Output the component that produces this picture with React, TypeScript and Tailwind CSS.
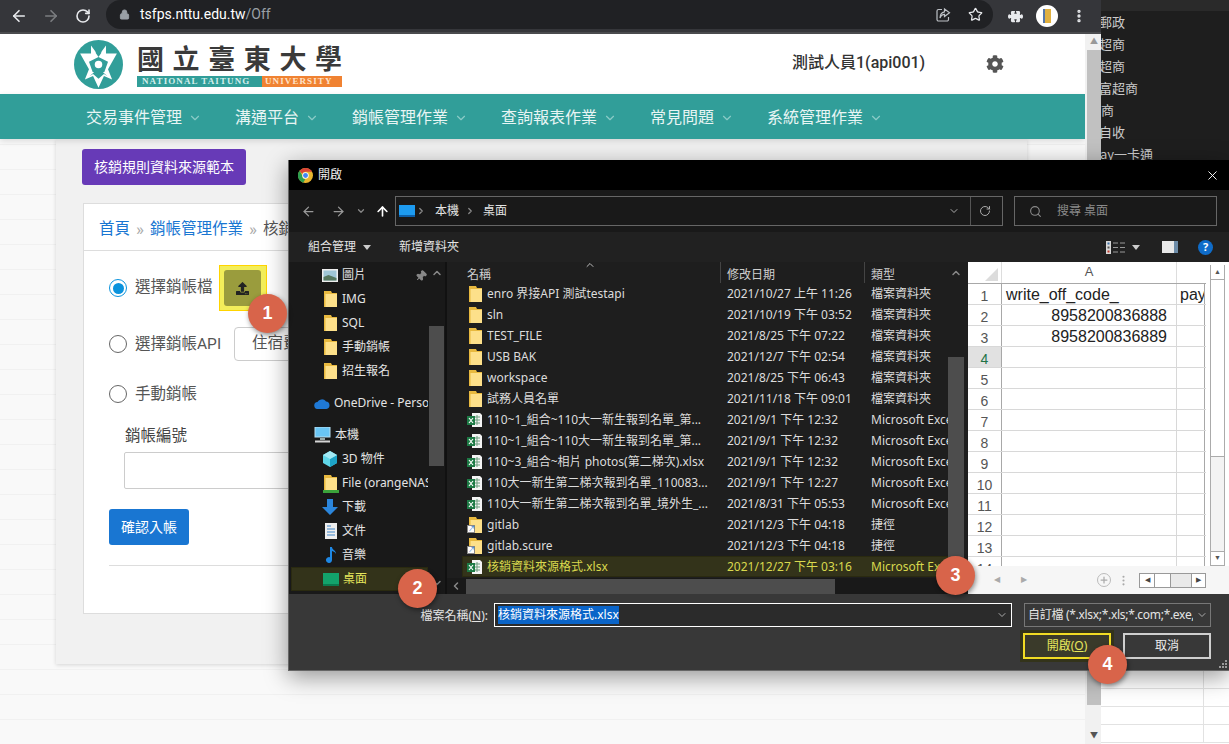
import React from 'react'
import { ArrowLeft, ArrowRight, ChevronDown, ChevronLeft, ChevronRight, Lock, RotateCw, Star, X, Search, ArrowUp, MoreVertical, Pin, ChevronUp, Plus } from 'lucide-react'
import { FaCog, FaUpload } from 'react-icons/fa'
import { BsPuzzleFill } from 'react-icons/bs'

const navItems = ['交易事件管理', '溝通平台', '銷帳管理作業', '查詢報表作業', '常見問題', '系統管理作業']

const sideRows = [
  { text: '郵政', cls: 'ml-[-2px]' },
  { text: '超商', cls: 'ml-[-2px]' },
  { text: '超商', cls: 'ml-[-2px]' },
  { text: '富超商', cls: 'ml-[-2px]' },
  { text: '商', cls: 'ml-0' },
  { text: '自收', cls: 'ml-[-2px]' },
  { text: 'ay一卡通', cls: 'ml-[-1px]' },
]

const files = [
  { kind: 'folder', name: 'enro 界接API 測試testapi', date: '2021/10/27 上午 11:26', type: '檔案資料夾' },
  { kind: 'folder', name: 'sln', date: '2021/10/19 下午 03:52', type: '檔案資料夾' },
  { kind: 'folder', name: 'TEST_FILE', date: '2021/8/25 下午 07:22', type: '檔案資料夾' },
  { kind: 'folder', name: 'USB BAK', date: '2021/12/7 下午 02:54', type: '檔案資料夾' },
  { kind: 'folder', name: 'workspace', date: '2021/8/25 下午 06:43', type: '檔案資料夾' },
  { kind: 'folder', name: '試務人員名單', date: '2021/11/18 下午 09:01', type: '檔案資料夾' },
  { kind: 'excel', name: '110~1_組合~110大一新生報到名單_第...', date: '2021/9/1 下午 12:32', type: 'Microsoft Excel' },
  { kind: 'excel', name: '110~1_組合~110大一新生報到名單_第...', date: '2021/9/1 下午 12:32', type: 'Microsoft Excel' },
  { kind: 'excel', name: '110~3_組合~相片 photos(第二梯次).xlsx', date: '2021/9/1 下午 12:32', type: 'Microsoft Excel' },
  { kind: 'excel', name: '110大一新生第二梯次報到名單_110083...', date: '2021/9/1 下午 12:27', type: 'Microsoft Excel' },
  { kind: 'excel', name: '110大一新生第二梯次報到名單_境外生_...', date: '2021/8/31 下午 05:53', type: 'Microsoft Excel' },
  { kind: 'link', name: 'gitlab', date: '2021/12/3 下午 04:18', type: '捷徑' },
  { kind: 'link', name: 'gitlab.scure', date: '2021/12/3 下午 04:18', type: '捷徑' },
]

const Folder = () => (
  <svg width="13" height="16" viewBox="0 0 13 16" className="shrink-0">
    <path d="M0 0h7l1 2h5v14H0z" fill="#e8b93f" />
    <path d="M1.500 3H13v13H1.500z" fill="#fde08a" />
  </svg>
)

const ExcelIcon = () => (
  <svg width="16" height="16" viewBox="0 0 16 16" className="shrink-0">
    <path d="M5 1h8l2 2v12H5z" fill="#f4f4f4" />
    <path d="M7 5h6M7 8h6M7 11h6M10 3v10" stroke="#6d9e7e" strokeWidth="1" />
    <rect x="0" y="4" width="8" height="9" fill="#1d7a45" />
    <path d="M2 6l4 5M6 6l-4 5" stroke="#fff" strokeWidth="1.2" />
  </svg>
)

const LinkIcon = () => (
  <span className="relative w-[15px] h-[16px] shrink-0 flex justify-end">
    <Folder />
    <span className="absolute left-0 bottom-0 w-[8px] h-[8px] bg-white border border-[#888] text-[#1a6fc9] text-[7px] leading-[6px] text-center">↗</span>
  </span>
)

const Badge = ({ n, pos }: { n: number; pos: string }) => (
  <div className={`absolute ${pos} w-[39px] h-[39px] rounded-full bg-[#d8644a] text-white font-bold text-[18px] flex items-center justify-center shadow-[1px_2px_5px_rgba(0,0,0,0.45)] [font-family:'Liberation_Sans',sans-serif] z-20`}>
    {n}
  </div>
)

const Radio = ({ on }: { on?: boolean }) => (
  <span className={`w-[18px] h-[18px] rounded-full border-[1.5px] flex items-center justify-center shrink-0 ${on ? 'border-[#0b93dd]' : 'border-[#666666]'}`}>
    {on && <span className="w-[11px] h-[11px] rounded-full bg-[#0b93dd]" />}
  </span>
)

const Emblem = () => (
  <svg width="49" height="49" viewBox="12 12 144 144" className="shrink-0">
    <circle cx="84" cy="84" r="72" fill="#319e99" />
    <path d="M30 52H62V28L84 58L106 28V52H138L112 98L124 128L100 118L84 152L68 118L44 128L56 98Z" fill="#fff" />
    <path d="M76 24V50L84 62L92 50V24Z" fill="#319e99" />
    <path d="M84 62L112 76L102 104L84 118L66 104L56 76Z" fill="#319e99" />
    <path d="M58 118L84 96L110 118L100 112L84 126L68 112Z" fill="#319e99" />
    <circle cx="84" cy="84" r="11" fill="#fff" />
  </svg>
)

const ChromeIcon = () => (
  <svg width="15" height="15" viewBox="0 0 16 16" className="shrink-0">
    <circle cx="8" cy="8" r="8" fill="#e8b52f" />
    <path d="M8 0a8 8 0 0 1 7 4H8a4 4 0 0 0-3.500 2L1.600 3A8 8 0 0 1 8 0z" fill="#db4437" />
    <path d="M1.600 3l3 5a4 4 0 0 0 3.200 4l-2.300 3.600A8 8 0 0 1 1.600 3z" fill="#2d9e4f" />
    <circle cx="8" cy="8" r="3.400" fill="#fff" />
    <circle cx="8" cy="8" r="2.600" fill="#4285f4" />
  </svg>
)

const ShareIcon = () => (
  <svg width="16" height="16" viewBox="0 0 16 16" fill="none" stroke="#bdc1c6" strokeWidth="1.200" className="ml-auto shrink-0">
    <path d="M7 2.500H3.500A1.500 1.500 0 0 0 2 4v8.500A1.500 1.500 0 0 0 3.500 14H12a1.500 1.500 0 0 0 1.500-1.500V10" />
    <path d="M9.500 2l5 3.800-5 3.700V7.400C7.500 7.400 6 8.500 5 11c0-3.500 1.800-5.700 4.500-6.200z" />
  </svg>
)

const ViewIcon = () => (
  <svg width="19" height="13" viewBox="0 0 19 13" className="shrink-0">
    <rect x="0" y="0" width="5" height="13" fill="#d8d8d8" />
    <rect x="1.500" y="1.500" width="2" height="2" fill="#3a6ea5" />
    <rect x="1.500" y="5.500" width="2" height="2" fill="#555" />
    <rect x="1.500" y="9.500" width="2" height="2" fill="#c0392b" />
    <path d="M7 2h5M14 2h5M7 6.500h5M14 6.500h5M7 11h5M14 11h5" stroke="#999" strokeWidth="1" />
  </svg>
)

const Grip = () => (
  <svg width="9" height="9" viewBox="0 0 9 9" className="absolute right-[1px] bottom-[1px]">
    <path d="M6 0h2v2H6zM3 3h2v2H3zM6 3h2v2H6zM0 6h2v2H0zM3 6h2v2H3zM6 6h2v2H6z" fill="#999" />
  </svg>
)

const NavIcon = ({ kind }: { kind: string }) => {
  if (kind === 'pic') return (
    <svg width="16" height="13" viewBox="0 0 16 13"><rect width="16" height="13" fill="#eee" /><rect x="1.500" y="1.500" width="13" height="10" fill="#9fc6d6" /><path d="M1.500 8l5-2 8 3v2.500h-13z" fill="#56785f" /></svg>
  )
  if (kind === 'folder' || kind === 'net') return (
    <span className="relative flex justify-center w-[14px]">
      <Folder />
      {kind === 'net' && <span className="absolute left-[-1px] bottom-[-2px] w-[16px] h-[3px] bg-[#3ba33b]" />}
    </span>
  )
  if (kind === 'cloud') return (
    <svg width="16" height="11" viewBox="0 0 16 11"><path d="M4 11a3.500 3.500 0 0 1-.5-7A5 5 0 0 1 12 3.500 3.800 3.800 0 0 1 12.500 11z" fill="#1f79d6" /></svg>
  )
  if (kind === 'pc') return (
    <svg width="17" height="16" viewBox="0 0 17 16"><rect x="1" y="0" width="15" height="10" fill="#69c5f4" stroke="#b8dff2" /><rect x="6" y="11" width="5" height="2" fill="#9aa" /><rect x="1" y="13.500" width="15" height="2" fill="#d5d5d5" /></svg>
  )
  if (kind === '3d') return (
    <svg width="16" height="16" viewBox="0 0 16 16"><path d="M8 0l7 4v8l-7 4-7-4V4z" fill="#5fd6e8" /><path d="M8 8l7-4v8l-7 4z" fill="#1da3c7" /><path d="M8 8L1 4l7-4 7 4z" fill="#a2eaf5" /></svg>
  )
  if (kind === 'down') return (
    <svg width="16" height="16" viewBox="0 0 16 16"><path d="M5 0h6v8h5l-8 8-8-8h5z" fill="#2b86dc" /></svg>
  )
  if (kind === 'doc') return (
    <svg width="12" height="16" viewBox="0 0 12 16"><rect width="12" height="16" fill="#eee" /><path d="M2 3h4M2 6h8M2 9h8M2 12h8" stroke="#3f86c9" strokeWidth="1.200" /></svg>
  )
  if (kind === 'music') return (
    <svg width="12" height="16" viewBox="0 0 12 16"><path d="M5 0h2c0 3 4 3 4 7-1-2-2-2.500-4-3v9a3 3 0 1 1-2-2.800z" fill="#1e88e5" /></svg>
  )
  return <svg width="16" height="13" viewBox="0 0 16 13"><rect width="16" height="13" fill="#13a36b" /><rect y="11" width="16" height="2" fill="#0b7a4e" /></svg>
}

const sideNav = [
  { icon: 'pic', label: '圖片', pl: 'pl-[33px]', w: 'w-[16px]' },
  { icon: 'folder', label: 'IMG', pl: 'pl-[34px]', w: 'w-[15px]' },
  { icon: 'folder', label: 'SQL', pl: 'pl-[34px]', w: 'w-[15px]' },
  { icon: 'folder', label: '手動銷帳', pl: 'pl-[34px]', w: 'w-[15px]' },
  { icon: 'folder', label: '招生報名', pl: 'pl-[34px]', w: 'w-[15px]' },
]
const sideNav2 = [
  { icon: 'pc', label: '本機', pl: 'pl-[25px]', w: 'w-[17px]' },
  { icon: '3d', label: '3D 物件', pl: 'pl-[33px]', w: 'w-[16px]' },
  { icon: 'net', label: 'File (orangeNAS', pl: 'pl-[34px]', w: 'w-[15px]' },
  { icon: 'down', label: '下載', pl: 'pl-[33px]', w: 'w-[16px]' },
  { icon: 'doc', label: '文件', pl: 'pl-[35px]', w: 'w-[14px]' },
  { icon: 'music', label: '音樂', pl: 'pl-[35px]', w: 'w-[14px]' },
]

const SideRow = ({ icon, label, pl, w }: { icon: string; label: string; pl: string; w: string }) => (
  <div className={`h-[24px] flex items-center ${pl} gap-[4px] whitespace-nowrap`}>
    <span className={`${w} flex justify-center shrink-0`}><NavIcon kind={icon} /></span>
    <span>{label}</span>
  </div>
)

const Sheet = () => {
  const rows = [1, 2, 3, 4, 5, 6, 7, 8, 9, 10, 11, 12, 13, 14]
  return (
    <div className="w-[261px] bg-white flex flex-col shrink-0 text-[#222] [font-family:'Liberation_Sans',sans-serif] overflow-hidden">
      <div className="flex flex-1 min-h-0">
        <div className="w-[238px] flex flex-col min-h-0 overflow-hidden">
          <div className="h-[22px] flex shrink-0 border-b border-[#a8a8a8] text-[#555] text-[13px]">
            <div className="w-[34px] relative border-r border-[#ddd]">
              <span className="absolute right-[3px] bottom-[2px] w-0 h-0 border-l-[13px] border-l-transparent border-b-[13px] border-b-[#dcdcdc]" />
            </div>
            <div className="w-[175px] text-center border-r border-[#ddd]">A</div>
          </div>
          {rows.map((r) => (
            <div key={r} className="h-[21px] flex shrink-0 border-b border-[#d8d8d8] text-[16px] leading-[20px]">
              <div className={`w-[34px] text-center text-[14px] border-r pt-[2px] ${r === 4 ? 'bg-[#e1e1e1] text-[#217346] border-[#a8a8a8]' : 'text-[#555] border-[#a8a8a8]'}`}>{r}</div>
              <div className={`w-[175px] px-[4px] border-r pt-[1px] border-[#d8d8d8] ${r === 1 ? '' : 'text-right pr-[9px]'}`}>
                {r === 1 ? 'write_off_code_' : r === 2 ? '8958200836888' : r === 3 ? '8958200836889' : ''}
              </div>
              <div className="w-[28px] overflow-hidden pl-[3px] border-r pt-[1px] border-[#a8a8a8]">{r === 1 ? 'pay' : ''}</div>
            </div>
          ))}
        </div>
        <div className="ml-[4px] w-[15px] flex flex-col mt-[3px] bg-[#f3f3f3] border-x border-[#ababab]">
          <div className="h-[15px] flex items-center justify-center border-b border-[#ababab] text-[#555] text-[7px] bg-white">▲</div>
          <div className="h-[177px] bg-white border-b border-[#ababab]" />
          <div className="flex-1" />
          <div className="h-[15px] flex items-center justify-center border-y border-[#ababab] text-[#555] text-[7px] bg-white">▼</div>
        </div>
      </div>
      <div className="h-[28px] bg-[#f6f6f6] flex items-center shrink-0 text-[#aaa] text-[8px] pr-[23px]">
        <span className="ml-[26px]">◀</span>
        <span className="ml-[21px]">▶</span>
        <span className="ml-[70px] w-[14px] h-[14px] rounded-full border border-[#bbb] flex items-center justify-center"><Plus size={10} strokeWidth={3} /></span>
        <MoreVertical size={13} className="ml-[6px]" />
        <span className="ml-[9px] flex-1 h-[15px] flex border border-[#999] bg-[#e9e9e9] text-[#444] text-[7px]">
          <span className="w-[15px] bg-white border-r border-[#999] flex items-center justify-center">◀</span>
          <span className="w-[16px] bg-white border-r border-[#999]" />
          <span className="flex-1" />
          <span className="w-[14px] bg-white border-l border-[#999] flex items-center justify-center">▶</span>
        </span>
      </div>
    </div>
  )
}

const FileDialog = () => (
  <div className="absolute left-[288px] top-[160px] w-[941px] h-[511px] z-10 flex flex-col bg-[#383838] border-l border-[#666] border-b shadow-[0_6px_22px_rgba(0,0,0,0.4)] text-[12px] text-[#e4e4e4] [font-family:'Noto_Sans','Noto_Sans_CJK_TC',sans-serif]">
    <div className="h-[30px] bg-black flex items-center pl-[9px] pr-[9px] shrink-0">
      <ChromeIcon />
      <span className="ml-[5px] text-[#eee]">開啟</span>
      <X size={15} className="ml-auto text-white" strokeWidth={1.5} />
    </div>

    <div className="h-[42px] bg-[#191919] flex items-center shrink-0 pl-[12px]">
      <ArrowLeft size={15} className="text-[#999]" />
      <ArrowRight size={15} className="text-[#999] ml-[15px]" />
      <ChevronDown size={10} className="text-[#888] ml-[10px]" strokeWidth={3} />
      <ArrowUp size={15} className="text-white ml-[9px]" strokeWidth={2.6} />
      <div className="ml-[5px] w-[608px] h-[30px] border border-[#666] flex items-center pl-[3px]">
        <span className="w-[16px] h-[12px] bg-[#1d9bf0] border-b-2 border-[#0d5fa8]" />
        <ChevronRight size={10} className="ml-[1px] text-[#888]" strokeWidth={3} />
        <span className="ml-[9px]">本機</span>
        <ChevronRight size={10} className="ml-[6px] text-[#888]" strokeWidth={3} />
        <span className="ml-[8px]">桌面</span>
        <ChevronDown size={12} className="ml-auto text-[#aaa]" />
        <span className="ml-[10px] w-px h-[28px] bg-[#555]" />
        <RotateCw size={12} className="ml-[8px] mr-[11px] text-[#aaa]" />
      </div>
      <div className="ml-[11px] w-[203px] h-[30px] border border-[#666] flex items-center pl-[14px] text-[#8a8a8a]">
        <Search size={13} />
        <span className="ml-[15px]">搜尋 桌面</span>
      </div>
    </div>

    <div className="h-[30px] bg-[#212121] flex items-center shrink-0 pl-[19px] text-[12px]">
      <span>組合管理</span>
      <span className="ml-[7px] w-0 h-0 border-x-[4px] border-x-transparent border-t-[5px] border-t-[#ccc]" />
      <span className="ml-[28px]">新增資料夾</span>
      <span className="ml-auto"><ViewIcon /></span>
      <span className="ml-[7px] w-0 h-0 border-x-[4px] border-x-transparent border-t-[5px] border-t-[#ccc]" />
      <span className="ml-[22px] w-[16px] h-[12px] bg-[#e8e8e8] border-r-[4px] border-[#6d8ca8]" />
      <span className="ml-[20px] mr-[16px] w-[15px] h-[15px] rounded-full bg-[#0f6cc9] text-white font-bold text-[11px] flex items-center justify-center">?</span>
    </div>

    <div className="flex-1 flex min-h-0 bg-[#111]">
      <div className="w-[156px] bg-[#191919] relative overflow-hidden shrink-0">
        <div className="pt-[1px] w-[139px] overflow-hidden">
          {sideNav.map((s) => <SideRow key={s.label} {...s} />)}
          <div className="h-[8px]" />
          <SideRow icon="cloud" label="OneDrive - Personal" pl="pl-[25px]" w="w-[16px]" />
          <div className="h-[8px]" />
          {sideNav2.map((s) => <SideRow key={s.label} {...s} />)}
          <div className="ml-[2px] w-[137px] h-[24px] flex items-center pl-[31px] gap-[4px] bg-[#33331a] border border-[#2a2a10] text-[#e6e65c]">
            <NavIcon kind="desk" />
            <span>桌面</span>
          </div>
        </div>
        <Pin size={12} className="absolute left-[126px] top-[8px] text-[#888] rotate-45" fill="#888" />
        <div className="absolute left-[140px] top-0 bottom-0 w-[16px]">
          <ChevronUp size={12} className="absolute left-[2px] top-[5px] text-[#888]" strokeWidth={3} />
          <div className="absolute left-0 top-[64px] w-[15px] h-[140px] bg-[#4d4d4d]" />
          <ChevronDown size={12} className="absolute left-[2px] bottom-[5px] text-[#888]" strokeWidth={3} />
        </div>
      </div>

      <div className="w-[518px] ml-[2px] bg-[#1e1e1e] flex flex-col shrink-0 relative">
        <div className="flex flex-1 min-h-0">
          <div className="w-[501px] flex flex-col overflow-hidden">
            <div className="h-[21px] flex items-center shrink-0 text-[#cfcfcf] relative">
              <span className="w-[274px] pl-[20px] pt-[5px] border-r border-[#444] h-full flex items-center">名稱</span>
              <span className="w-[144px] pl-[6px] pt-[5px] border-r border-[#444] h-full flex items-center">修改日期</span>
              <span className="pl-[6px] pt-[5px]">類型</span>
              <ChevronUp size={12} className="absolute left-[137px] top-[-3px] text-[#bbb]" />
            </div>
            {files.map((f, i) => (
              <div key={i} className="h-[21px] flex items-center shrink-0 whitespace-nowrap text-[#dcdcdc]">
                <span className={`w-[40px] flex shrink-0 ${f.kind === 'folder' ? 'pl-[22px]' : 'pl-[20px]'}`}>
                  {f.kind === 'folder' ? <Folder /> : f.kind === 'excel' ? <ExcelIcon /> : <LinkIcon />}
                </span>
                <span className="w-[233px] overflow-hidden">{f.name}</span>
                <span className="w-[144px] pl-[7px]">{f.date}</span>
                <span className="pl-[7px] overflow-hidden flex-1">{f.type}</span>
              </div>
            ))}
            <div className="h-[21px] ml-[15px] flex items-center shrink-0 whitespace-nowrap bg-[#33331a] border border-[#2a2a10] text-[#d9d94e]">
              <span className="w-[24px] pl-[4px] flex shrink-0"><ExcelIcon /></span>
              <span className="w-[233px]">核銷資料來源格式.xlsx</span>
              <span className="w-[144px] pl-[7px]">2021/12/27 下午 03:16</span>
              <span className="pl-[7px] overflow-hidden flex-1">Microsoft Excel</span>
            </div>
          </div>
          <div className="w-[17px] relative">
            <ChevronUp size={12} className="absolute left-[2px] top-[5px] text-[#888]" strokeWidth={3} />
            <div className="absolute left-0 top-[95px] w-[16px] h-[220px] bg-[#4d4d4d]" />
          </div>
        </div>
        <div className="h-[16px] flex items-center shrink-0 bg-[#191919]">
          <ChevronLeft size={12} className="ml-[3px] text-[#888]" strokeWidth={3} />
          <div className="ml-[4px] w-[369px] h-[15px] bg-[#4d4d4d]" />
        </div>
      </div>

      <div className="w-[3px] shrink-0 bg-[#1e1e1e]" />
      <Sheet />
    </div>

    <div className="h-[76px] shrink-0 relative">
      <div className="flex items-center pt-[9px] pl-[125px]">
        <span className="w-[74px] text-right pt-[1px]">檔案名稱(<span className="underline">N</span>):</span>
        <div className="ml-[6px] w-[518px] h-[24px] border border-white bg-[#2b2b2b] flex items-center pl-[3px]">
          <span className="bg-[#0a64c8] text-white h-[18px] leading-[18px]">核銷資料來源格式.xlsx</span>
          <ChevronDown size={12} className="ml-auto mr-[3px] text-[#aaa]" />
        </div>
        <div className="ml-[12px] w-[187px] h-[24px] border border-[#777] flex items-center pl-[3px] overflow-hidden whitespace-nowrap tracking-[-0.3px]">
          <span className="w-[165px] overflow-hidden">自訂檔 (*.xlsx;*.xls;*.com;*.exe,</span>
          <ChevronDown size={12} className="ml-[3px] text-[#aaa] shrink-0" />
        </div>
      </div>
      <div className="flex items-center justify-end pr-[18px] mt-[6px]">
        <div className="w-[88px] h-[26px] border-2 border-[#f1dc24] bg-[#3a3a2a] flex items-center justify-center text-[#e6e65c] shadow-[0_0_0_3px_#33331a]">開啟(<span className="underline">O</span>)</div>
        <div className="ml-[12px] w-[88px] h-[26px] border-2 border-[#cfcfcf] flex items-center justify-center text-[#eee]">取消</div>
      </div>
      <Grip />
    </div>
  </div>
)

export default function App() {
  return (
    <div className="relative w-[1229px] h-[744px] overflow-hidden flex bg-white">
      <div className="w-[1101px] shrink-0 flex flex-col h-full [font-family:Roboto,'Noto_Sans_CJK_TC',sans-serif]">
        <div className="h-[34px] shrink-0 bg-[#35363a] border-b-2 border-[#4a4b4e] flex items-center pl-[10px] text-[#e8eaed]">
          <ArrowLeft size={18} strokeWidth={2.2} />
          <ArrowRight size={18} strokeWidth={2.2} className="ml-[14px] text-[#7b7d80]" />
          <RotateCw size={16} strokeWidth={2.4} className="ml-[15px]" />
          <div className="ml-[15px] w-[887px] h-[29px] mt-[-3px] rounded-full bg-[#202124] flex items-center pl-[13px] pr-[10px]">
            <Lock size={11} fill="#9aa0a6" className="text-[#9aa0a6]" />
            <span className="ml-[10px] text-[14px] text-white">tsfps.nttu.edu.tw<span className="text-[#9aa0a6]">/Off</span></span>
            <ShareIcon />
            <Star size={15} className="ml-[17px] text-[#e8eaed]" />
          </div>
          <BsPuzzleFill size={15} className="ml-[15px]" />
          <span className="ml-[13px] w-[22px] h-[22px] rounded-full bg-white flex items-center justify-center">
            <span className="w-[8px] h-[14px] bg-[#e0b040] border-l-2 border-[#5577aa]" />
          </span>
          <MoreVertical size={16} className="ml-[13px]" strokeWidth={3} />
        </div>

        <div className="flex-1 flex min-h-0">
          <div className="w-[1085px] flex flex-col bg-[repeating-linear-gradient(to_bottom,#f9f9f9_0,#f9f9f9_10px,#f1f1f1_10px,#f1f1f1_11px,#f9f9f9_11px,#f9f9f9_25px)]">
            <div className="h-[60px] bg-white flex items-center shrink-0 pl-[74px]">
              <Emblem />
              <div className="ml-[14px] w-[205px] flex flex-col mt-[1px]">
                <div className="h-[36px] flex justify-between items-center text-[27px] leading-[36px] font-semibold text-[#3a3a3a] mt-[-2px] [font-family:'Noto_Sans_CJK_TC',sans-serif]">
                  {['國', '立', '臺', '東', '大', '學'].map((c) => <span key={c}>{c}</span>)}
                </div>
                <div className="h-[11px] flex text-[9px] leading-[11px] tracking-[1.1px] [font-family:'Liberation_Serif',serif] font-bold text-[#d5efec]">
                  <span className="w-[125px] bg-[#319e99] pl-[5px] overflow-hidden whitespace-nowrap">NATIONAL TAITUNG</span>
                  <span className="flex-1 bg-[#f08232] pl-[3px] overflow-hidden whitespace-nowrap text-[#ffe3c9]">UNIVERSITY</span>
                </div>
              </div>
              <span className="ml-[450px] text-[16px] text-[#333] font-medium whitespace-nowrap mt-[-2px]">測試人員1(api001)</span>
              <FaCog size={18} className="ml-[61px] text-[#555]" />
            </div>

            <div className="relative h-[45px] bg-[#319e99] flex items-center shrink-0 pl-[86px] pt-[3px] text-[16px] text-[#e8f5f4] shadow-[0_2px_6px_rgba(0,0,0,0.12)]">
              {navItems.map((item) => (
                <div key={item} className="flex items-center mr-[33px]">
                  <span className="whitespace-nowrap">{item}</span>
                  <ChevronDown size={14} className="ml-[6px] text-[#8bcbc7]" />
                </div>
              ))}
            </div>

            <div className="ml-[56px] w-[971px] h-[525px] bg-[#f1f1f1] shadow-[0_1px_4px_rgba(0,0,0,0.15)] pt-[10px] pl-[26px] pr-[27px] flex flex-col items-start text-[#555]">
              <button className="w-[164px] h-[36px] rounded-[3px] bg-[#673ab7] text-white text-[14px]">核銷規則資料來源範本</button>
              <div className="mt-[18px] ml-px w-full bg-white border border-[#dddddd] pb-[47px]">
                <div className="h-[47px] border-b border-[#dddddd] flex items-center pl-[15px] pt-[6px] text-[15.500px] whitespace-nowrap">
                  <span className="text-[#1976d2]">首頁</span>
                  <span className="w-[20px] text-center text-[17px] text-[#aaa]">»</span>
                  <span className="text-[#1976d2]">銷帳管理作業</span>
                  <span className="w-[20px] text-center text-[17px] text-[#aaa]">»</span>
                  <span>核銷作業</span>
                </div>
                <div className="pl-[25px] pt-[14px] text-[15.500px] pr-[25px]">
                  <div className="h-[46px] flex items-center">
                    <Radio on />
                    <span className="ml-[8px]">選擇銷帳檔</span>
                    <div className="ml-[6px] w-[48px] h-[46px] border border-[#ffd400] bg-[#f3ee5a] flex items-center justify-center">
                      <span className="w-[37px] h-[36px] rounded-[3px] bg-[#9a9c3d] flex items-center justify-center">
                        <FaUpload size={13} className="text-[#222]" />
                      </span>
                    </div>
                  </div>
                  <div className="mt-[16px] h-[34px] flex items-center">
                    <Radio />
                    <span className="ml-[8px] pt-[1px]">選擇銷帳API</span>
                    <div className="ml-[13px] w-[300px] h-[34px] border border-[#cccccc] rounded-[4px] flex items-center pl-[17px]">住宿費</div>
                  </div>
                  <div className="mt-[23px] h-[20px] flex items-center">
                    <Radio />
                    <span className="ml-[8px] pt-[1px]">手動銷帳</span>
                  </div>
                  <div className="mt-[22px] ml-[16px] h-[20px] pt-[2px] flex items-center text-[#444]">銷帳編號</div>
                  <div className="mt-[6px] ml-[15px] w-[400px] h-[37px] border border-[#cccccc] rounded-[2px] bg-white" />
                  <button className="mt-[20px] w-[80px] h-[36px] rounded-[3px] bg-[#1976d2] text-white text-[14px] block">確認入帳</button>
                  <div className="mt-[20px] border-t border-[#dddddd]" />
                </div>
              </div>
            </div>
          </div>

          <div className="w-[16px] bg-[#f1f1f1] flex flex-col items-center shrink-0 pl-[2px] relative">
            <span className="w-full h-[16px] text-[#999] text-[8px] flex items-center justify-center">▲</span>
            <span className="w-full h-[655px] bg-[#c1c1c1]" />
            <span className="mt-auto w-full h-[16px] text-[#555] text-[8px] flex items-center justify-center">▼</span>
          </div>
        </div>
      </div>

      <div className="flex-1 flex flex-col min-w-0 overflow-hidden">
        <div className="h-[11px] bg-[#2a2a2a] shrink-0" />
        <div className="h-[160px] bg-[#1e1e1e] shrink-0 overflow-hidden text-[13px] leading-[22px] text-[#cccccc] [font-family:'Noto_Sans_CJK_TC',sans-serif]">
          {sideRows.map((r, i) => (
            <div key={i} className={`${r.cls} whitespace-nowrap`}>{r.text}</div>
          ))}
        </div>
        <div className="flex-1 bg-[#1e1e1e]" />
        <div className="h-[73px] bg-white shrink-0 flex flex-col">
          {[0, 1, 2, 3].map((i) => (
            <div key={i} className="h-[18px] border-b border-[#e2e2e2] relative">
              <span className="absolute left-[102px] top-0 bottom-0 border-l border-[#e2e2e2]" />
            </div>
          ))}
        </div>
      </div>

      <FileDialog />
      <Badge n={1} pos="left-[248px] top-[294px]" />
      <Badge n={2} pos="left-[398px] top-[569px]" />
      <Badge n={3} pos="left-[936px] top-[556px]" />
      <Badge n={4} pos="left-[1088px] top-[645px]" />
    </div>
  )
}
